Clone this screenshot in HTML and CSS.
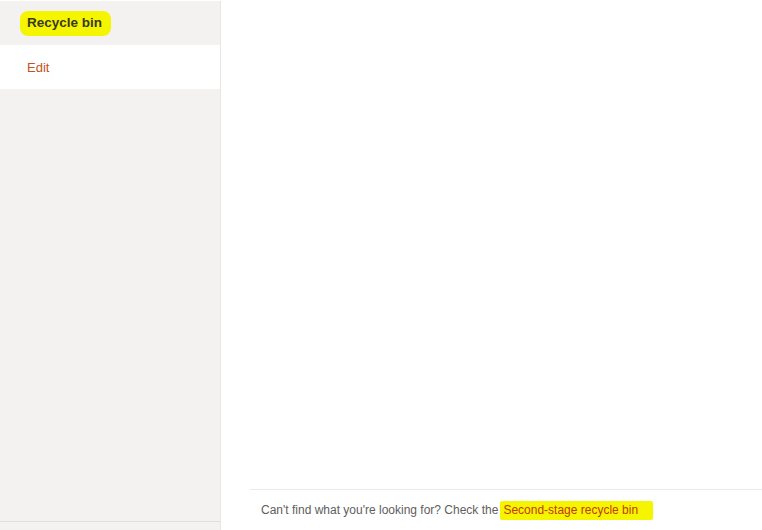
FILE: index.html
```html
<!DOCTYPE html>
<html lang="en">
<head>
    <meta charset="UTF-8">
    <title>Recycle bin</title>
    <link rel="stylesheet" href="styles.css">
</head>
<body>

<div class="page">
    <div class="sidebar">
        <div class="sidebar-title"><span class="mark">Recycle bin</span></div>
        <div class="sidebar-item">Edit</div>
        <div class="sidebar-fill"></div>
        <div class="sidebar-end"></div>
    </div>

    <div class="main">
        <div class="content"></div>
        <div class="footer">
            <span>Can't find what you're looking for? Check the</span><a href="#" class="link mark">Second-stage recycle bin</a>
        </div>
    </div>
</div>

</body>
</html>
```

FILE: styles.css
```css
body {
    margin: 0;
    font-family: "Liberation Sans", Arial, sans-serif;
    background-color: #fff;
}
.page {
    display: flex;
    height: 530px;
}
.sidebar {
    width: 220px;
    margin-top: 1px;
    background-color: #f3f2f1;
    border-right: 1px solid #e8e6e4;
    display: flex;
    flex-direction: column;
}
.sidebar-title {
    height: 44px;
    display: flex;
    align-items: center;
    padding-left: 20px;
    font-size: 13.5px;
    font-weight: bold;
    color: #3b3a20;
}
.sidebar-title .mark {
    padding: 4px 9px 6px 7px;
    border-radius: 8px;
}
.mark {
    background-color: #f5f500;
}
.sidebar-item {
    height: 44px;
    display: flex;
    align-items: center;
    padding-left: 27px;
    background-color: #fff;
    font-size: 13px;
    color: #c4511c;
}
.sidebar-fill {
    flex: 1;
}
.sidebar-end {
    height: 8px;
    border-top: 1px solid #e1dfdd;
}
.main {
    flex: 1;
    display: flex;
    flex-direction: column;
}
.content {
    flex: 1;
}
.footer {
    margin-left: 29px;
    height: 40px;
    border-top: 1px solid #edebe9;
    padding-left: 11px;
    display: flex;
    align-items: center;
    font-size: 12px;
    color: #605e5c;
    white-space: nowrap;
}
.link {
    margin-left: 2px;
    color: #c5370f;
    text-decoration: none;
    padding: 2px 15px 3px 3px;
    border-radius: 2px;
}
```
